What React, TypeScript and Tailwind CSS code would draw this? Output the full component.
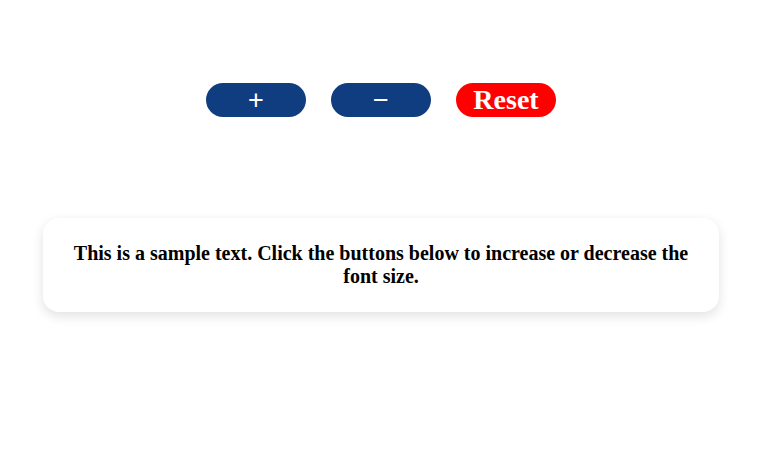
import React, { useState } from "react";

export default function App() {
  const [size, setSize] = useState(20);
  return (
    <div className="w-[762px] bg-white min-h-[450px]" style={{ fontFamily: '"Liberation Serif", serif' }}>
      <div className="flex justify-center gap-[25px] pt-[83px]">
        <button
          onClick={() => setSize(size + 1)}
          className="w-[100px] h-[34px] rounded-full bg-[#0f3d80] text-white text-[27px] font-normal leading-none flex items-center justify-center font-['Liberation_Sans',sans-serif]"
        >
          +
        </button>
        <button
          onClick={() => setSize(size - 1)}
          className="w-[100px] h-[34px] rounded-full bg-[#0f3d80] text-white text-[27px] font-normal leading-none flex items-center justify-center font-['Liberation_Sans',sans-serif]"
        >
          −
        </button>
        <button
          onClick={() => setSize(20)}
          className="w-[100px] h-[34px] rounded-full bg-[#ff0000] text-white text-[28px] font-bold leading-none flex items-center justify-center font-['Liberation_Serif',serif]"
        >
          Reset
        </button>
      </div>
      <div className="mx-[43px] mt-[101px] rounded-[16px] bg-white shadow-[0_4px_12px_rgba(0,0,0,0.12)] px-[28px] py-[24px]">
        <p className="text-center font-bold text-black leading-[23px]" style={{ fontSize: size }}>
          This is a sample text. Click the buttons below to increase or decrease the font size.
        </p>
      </div>
    </div>
  );
}
